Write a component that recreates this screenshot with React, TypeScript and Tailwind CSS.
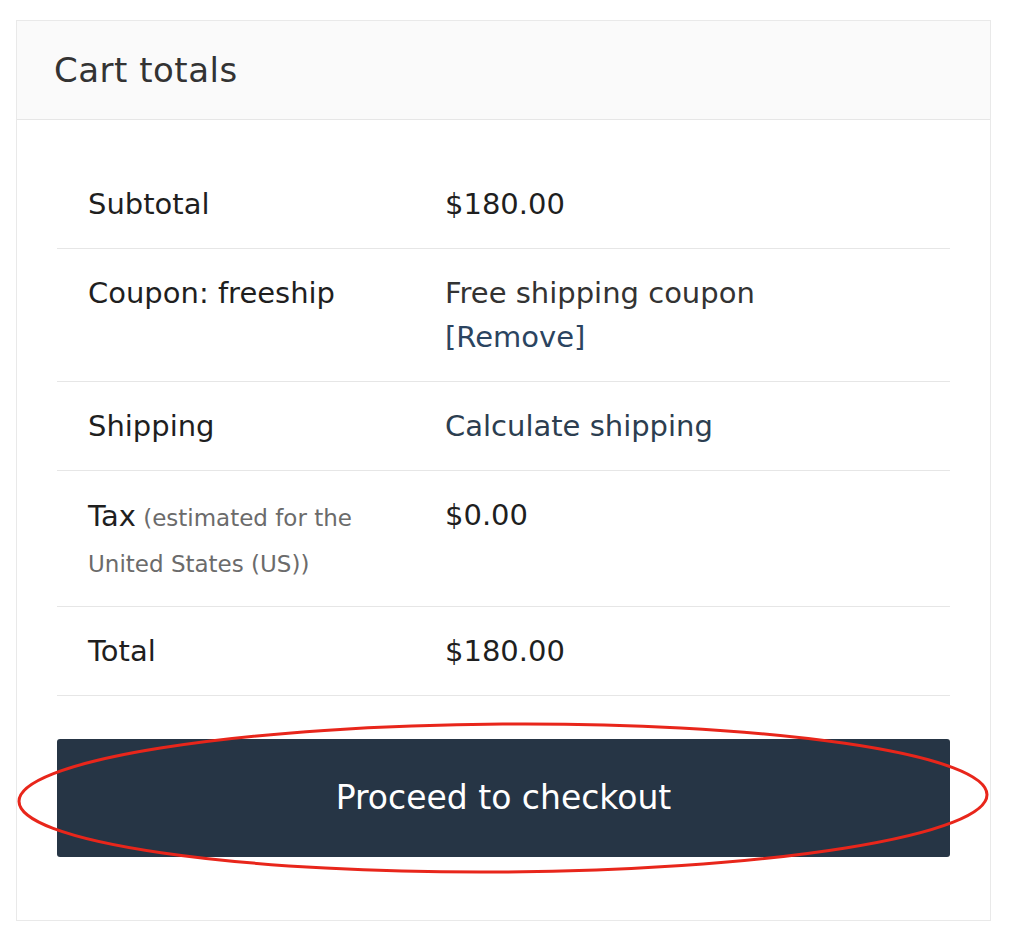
import React from "react";

const font = { fontFamily: '"DejaVu Sans", "Liberation Sans", sans-serif' };

function Row({
  label,
  children,
}: {
  label: React.ReactNode;
  children: React.ReactNode;
}) {
  return (
    <div className="flex border-b border-[#e6e6e6] py-[22px]">
      <div className="w-[388px] shrink-0 pl-[31px] pr-[60px] text-[29px] leading-[44px] text-[#1f1f1f]">
        {label}
      </div>
      <div className="flex-1 text-[29px] leading-[44px] text-[#1f1f1f]">
        {children}
      </div>
    </div>
  );
}

export default function App() {
  return (
    <div className="w-[1012px] h-[944px] bg-white pt-5 pl-4" style={font}>
      <div className="relative w-[975px] border border-[#e9e9e9] bg-white">
        {/* header */}
        <div className="h-[99px] bg-[#fafafa] border-b border-[#e6e6e6] pl-[37px] flex items-center">
          <h2 className="text-[34px] text-[#333] tracking-[0.5px]">Cart totals</h2>
        </div>

        <div className="px-10 pt-[40px] pb-[63px]">
          <Row label="Subtotal">$180.00</Row>
          <Row label="Coupon: freeship">
            <div className="text-[#333]">Free shipping coupon</div>
            <div className="text-[#2b4460]">[Remove]</div>
          </Row>
          <Row label="Shipping">
            <span className="text-[#2c3e50]">Calculate shipping</span>
          </Row>
          <div className="flex border-b border-[#e6e6e6] py-[22px]">
            <div className="h-[91px] w-[388px] shrink-0 pl-[31px] pr-[50px] leading-[46px] text-[#6b6b6b] text-[23px]">
              <span className="text-[29px] text-[#1f1f1f]">Tax</span>{" "}
              (estimated for the United States (US))
            </div>
            <div className="flex-1 text-[29px] leading-[44px] text-[#1f1f1f]">$0.00</div>
          </div>
          <Row label="Total">$180.00</Row>

          <button className="mt-[43px] w-full h-[118px] rounded-[3px] bg-[#263545] text-white text-[33px]">
            Proceed to checkout
          </button>
        </div>

        {/* red highlight ellipse */}
        <svg
          className="absolute left-0 top-[680px] pointer-events-none"
          width="975"
          height="180"
          viewBox="0 0 975 180"
        >
          <ellipse
            cx="486"
            cy="97"
            rx="484"
            ry="74"
            fill="none"
            stroke="#e8261b"
            strokeWidth="3"
            transform="rotate(-0.4 486 97)"
          />
        </svg>
      </div>
    </div>
  );
}
